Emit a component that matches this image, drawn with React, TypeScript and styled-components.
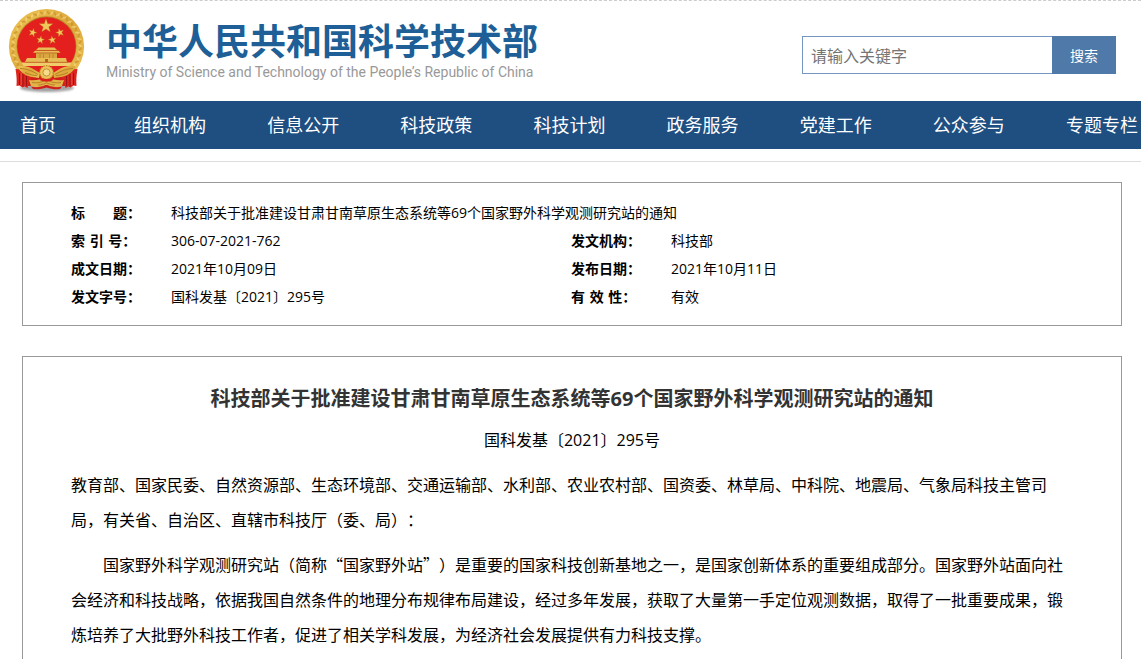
import React from "react";
import styled, { createGlobalStyle } from "styled-components";

const GlobalStyle = createGlobalStyle`
  * { box-sizing: border-box; }
  body {
    margin: 0;
    background: #fff;
    color: #000;
    font-family: "Open Sans", "Noto Sans CJK SC", sans-serif;
    font-size: 14px;
    text-spacing-trim: space-all;
  }
`;

const Header = styled.header`
  display: flex;
  align-items: flex-start;
  justify-content: space-between;
  height: 101px;
  padding: 7px 25px 0 8px;
  border-top: 1px dashed #ccc;
`;

const Brand = styled.a`
  display: flex;
  gap: 19px;
  color: inherit;
  text-decoration: none;
`;

const EmblemSvg = styled.svg`
  flex: none;
  width: 79px;
  height: 86px;
`;

const BrandText = styled.div`
  padding-top: 14px;
  white-space: nowrap;
`;

const SiteName = styled.div`
  color: #1d5f96;
  font-family: "Liberation Sans", "Noto Sans CJK SC", sans-serif;
  font-size: 36px;
  font-weight: 700;
  line-height: 42px;
`;

const SiteNameEn = styled.div`
  color: #999;
  font-family: Roboto, sans-serif;
  font-size: 14px;
  line-height: 16px;
`;

const Search = styled.form`
  display: flex;
  margin-top: 28px;
`;

const SearchInput = styled.input`
  width: 250px;
  height: 38px;
  padding: 0 8px;
  border: 1px solid #7397c0;
  border-right: 0;
  border-radius: 0;
  outline: none;
  font-family: "Noto Sans CJK SC", sans-serif;
  font-size: 16px;
  &::placeholder { color: #757575; }
`;

const SearchButton = styled.button`
  width: 64px;
  height: 38px;
  padding: 0;
  border: 0;
  background: #4e79a8;
  color: #fff;
  font-family: "Open Sans", "Noto Sans CJK SC", sans-serif;
  font-size: 14px;
`;

const Nav = styled.nav`
  display: grid;
  grid-template-columns: 114fr repeat(7, 133fr) max-content;
  padding: 0 3px 0 20px;
  background: #1f4e81;
`;

const NavLink = styled.a`
  color: #fff;
  font-size: 18px;
  line-height: 48px;
  text-decoration: none;
  white-space: nowrap;
`;

const Main = styled.main`
  margin-top: 12px;
  padding: 20px 19px 30px 22px;
  border-top: 1px solid #ddd;
`;

const InfoPanel = styled.section`
  padding: 16px 48px 14px;
  border: 1px solid #999;
`;

const InfoTable = styled.table`
  width: 100%;
  table-layout: fixed;
  border-collapse: collapse;
  line-height: 28px;
`;

const LabelCol = styled.col`
  width: 100px;
`;

const ValueCol = styled.col`
  width: 400px;
`;

const InfoLabel = styled.th`
  padding: 0;
  font-weight: 700;
  text-align: left;
  white-space: pre;
`;

const InfoValue = styled.td`
  padding: 0;
`;

const Article = styled.article`
  margin-top: 30px;
  padding: 24px 48px 48px;
  border: 1px solid #999;
  font-size: 16px;
`;

const ArticleTitle = styled.h1`
  margin: 0;
  color: #333;
  font-size: 20px;
  font-weight: 700;
  line-height: 35px;
  text-align: center;
`;

const DocNumber = styled.p`
  margin: 7px 0 9px;
  line-height: 35px;
  text-align: center;
`;

const Paragraph = styled.p<{ $indent?: boolean }>`
  margin: 0 0 10px;
  font-family: "Noto Sans CJK SC", sans-serif;
  line-height: 35px;
  text-indent: ${(p) => (p.$indent ? "2em" : "0")};
`;

const NAV = ["首页", "组织机构", "信息公开", "科技政策", "科技计划", "政务服务", "党建工作", "公众参与", "专题专栏"];

const INFO = [
  ["索\u2004引\u2004号：", "306-07-2021-762", "发文机构：", "科技部"],
  ["成文日期：", "2021年10月09日", "发布日期：", "2021年10月11日"],
  ["发文字号：", "国科发基〔2021〕295号", "有\u2004效\u2004性：", "有效"],
];

const TITLE = "科技部关于批准建设甘肃甘南草原生态系统等69个国家野外科学观测研究站的通知";

function star(cx: number, cy: number, r: number, turn = 0) {
  return Array.from({ length: 10 }, (_, i) => {
    const a = -Math.PI / 2 + turn + (i * Math.PI) / 5;
    const d = i % 2 ? r * 0.4 : r;
    return `${(cx + d * Math.cos(a)).toFixed(2)},${(cy + d * Math.sin(a)).toFixed(2)}`;
  }).join(" ");
}

const GRAINS = Array.from({ length: 52 }, (_, i) => {
  const deg = 125 + i * 5.7;
  const a = (deg * Math.PI) / 180;
  return { x: 38.5 + 33.8 * Math.cos(a), y: 38.5 + 33.8 * Math.sin(a), deg: deg + (i % 2 ? 40 : -50) };
});

function Emblem() {
  return (
    <EmblemSvg viewBox="0 0 79 86" role="img" aria-label="国徽">
      <defs>
        <linearGradient id="gold" x1="0" y1="0" x2="1" y2="1">
          <stop offset="0" stopColor="#eec656" />
          <stop offset="0.5" stopColor="#dda738" />
          <stop offset="1" stopColor="#ecc455" />
        </linearGradient>
        <filter id="soft" x="-20%" y="-60%" width="140%" height="220%">
          <feGaussianBlur stdDeviation="1.3" />
        </filter>
      </defs>
      <ellipse cx="39" cy="80" rx="27" ry="4" fill="#666" opacity="0.6" filter="url(#soft)" />
      <circle cx="38.5" cy="38.5" r="37.6" fill="url(#gold)" />
      {GRAINS.map((g, i) => (
        <ellipse
          key={i}
          cx={g.x}
          cy={g.y}
          rx="3"
          ry="0.9"
          fill={i % 2 ? "#f8df8c" : "#c48a27"}
          opacity="0.6"
          transform={`rotate(${g.deg} ${g.x} ${g.y})`}
        />
      ))}
      <circle cx="38.5" cy="38.3" r="30" fill="#b9862a" />
      <circle cx="38.5" cy="38.5" r="29.3" fill="#e3201e" />
      <g fill="#f0c85a" stroke="#bd7a1c" strokeWidth="0.3">
        <polygon points={star(38, 18, 7.2)} />
        <polygon points={star(24.7, 24.6, 4.3, 0.3)} />
        <polygon points={star(52, 24.6, 4.3, -0.3)} />
        <polygon points={star(32.5, 32, 4.1, 0.15)} />
        <polygon points={star(44.3, 32, 4.1, -0.15)} />
      </g>
      <path d="M14 64c8-2 16-1 24.500 2 8.500-3 16.500-4 24.500-2l-4 14H18z" fill="#cf1d19" />
      <g fill="#e9bd55">
        <path d="M30.500 39.500h16l2.500 2.500H28zM27 42.800h23.500l2 2H25z" />
        <path d="M28 45h21v5H28z" fill="#dba640" />
        <path d="M19 50h39l1 4H17z" />
        <path d="M13 54.500h51l-2.500 3.500h-46z" fill="#f0cc6a" />
      </g>
      <path d="M28 42.400h21M28 45.200h21M18 54.200h42M32 46v4M35.500 46v4M41.500 46v4M45 46v4" stroke="#a9731f" strokeWidth="0.6" fill="none" />
      <path d="M37 51h3v3h-3z" fill="#b3651b" />
      <path d="M7.500 61c5 0 10 2 14 5l3 3-3 4-2 7-3-1.500-2 1-3-2-3 .5c.5-6 0-11-1-17z" fill="#dc241f" />
      <path d="M69.500 61c-5 0-10 2-14 5l-3 3 3 4 2 7 3-1.500 2 1 3-2 3 .5c-.5-6 0-11 1-17z" fill="#dc241f" />
      <path d="M11.500 65v12M15 66v12.500M18.500 68v10M65.500 65v12M62 66v12.500M58.500 68v10" stroke="#8f1411" strokeWidth="0.9" />
      <path d="M13.200 65v12M63.800 65v12" stroke="#f2574a" strokeWidth="0.8" />
      <path d="M9 58.500c6-1.500 13 0 18 3.500l5 3-1 5-7-1c-6-1-11-4-15-10.500z" fill="url(#gold)" />
      <path d="M68 58.500c-6-1.500-13 0-18 3.500l-5 3 1 5 7-1c6-1 11-4 15-10.500z" fill="url(#gold)" />
      <path d="M12 60.500c7 0 13 3 18 6M17 64.500c4 2 8 3 12 3M65 60.500c-7 0-13 3-18 6M60 64.500c-4 2-8 3-12 3" stroke="#aa7422" strokeWidth="0.8" fill="none" />
      <path d="M21 72c6 1 11-.5 17.500-2.500C45 71.500 50 73 56 72l-2 6c-5 2-10 1-15.500-1-5.500 2-10.500 3-15.500 1z" fill="#e4b347" />
      <path d="M24 74.500c5 1 9 0 13-2M53 74.500c-5 1-9 0-13-2M30 77c3 0 6-1 8.500-2.200 2.500 1.200 5.500 2.200 8.500 2.200" stroke="#a9701e" strokeWidth="0.8" fill="none" />
      <circle cx="38.5" cy="64.5" r="6.8" fill="#ecc35a" stroke="#c58f2c" strokeWidth="1.3" strokeDasharray="1.6 1" />
      <circle cx="38.5" cy="64.5" r="3.6" fill="#f6dc8a" stroke="#b88029" strokeWidth="0.8" />
      <path d="M31 69c4 2.500 11 2.500 15 0l-1.500 3.500c-4 1.500-8 1.500-12 0z" fill="#d81f1b" />
      <path d="M23 78.500c5 1.500 10 .5 15.500-1.500 5.500 2 10.500 3 15.500 1.500l-2 2.500c-4 .8-9 0-13.500-1.500C34 81 29 81.800 25 81z" fill="#d0201b" />
    </EmblemSvg>
  );
}

export default function App() {
  return (
    <>
      <GlobalStyle />
      <Header>
        <Brand href="#">
          <Emblem />
          <BrandText>
            <SiteName>中华人民共和国科学技术部</SiteName>
            <SiteNameEn>Ministry of Science and Technology of the People’s Republic of China</SiteNameEn>
          </BrandText>
        </Brand>
        <Search onSubmit={(e) => e.preventDefault()}>
          <SearchInput type="text" aria-label="关键字" placeholder="请输入关键字" />
          <SearchButton type="submit">搜索</SearchButton>
        </Search>
      </Header>
      <Nav>
        {NAV.map((label) => (
          <NavLink key={label} href="#">{label}</NavLink>
        ))}
      </Nav>
      <Main>
        <InfoPanel>
          <InfoTable>
            <colgroup>
              <LabelCol />
              <ValueCol />
              <LabelCol />
              <col />
            </colgroup>
            <tbody>
              <tr>
                <InfoLabel scope="row">标　　题：</InfoLabel>
                <InfoValue colSpan={3}>{TITLE}</InfoValue>
              </tr>
              {INFO.map(([label, value, label2, value2]) => (
                <tr key={label}>
                  <InfoLabel scope="row">{label}</InfoLabel>
                  <InfoValue>{value}</InfoValue>
                  <InfoLabel scope="row">{label2}</InfoLabel>
                  <InfoValue>{value2}</InfoValue>
                </tr>
              ))}
            </tbody>
          </InfoTable>
        </InfoPanel>
        <Article>
          <ArticleTitle>{TITLE}</ArticleTitle>
          <DocNumber>国科发基〔2021〕295号</DocNumber>
          <Paragraph>
            教育部、国家民委、自然资源部、生态环境部、交通运输部、水利部、农业农村部、国资委、林草局、中科院、地震局、气象局科技主管司局，有关省、自治区、直辖市科技厅（委、局）：
          </Paragraph>
          <Paragraph $indent>
            国家野外科学观测研究站（简称“国家野外站”）是重要的国家科技创新基地之一，是国家创新体系的重要组成部分。国家野外站面向社会经济和科技战略，依据我国自然条件的地理分布规律布局建设，经过多年发展，获取了大量第一手定位观测数据，取得了一批重要成果，锻炼培养了大批野外科技工作者，促进了相关学科发展，为经济社会发展提供有力科技支撑。
          </Paragraph>
        </Article>
      </Main>
    </>
  );
}
